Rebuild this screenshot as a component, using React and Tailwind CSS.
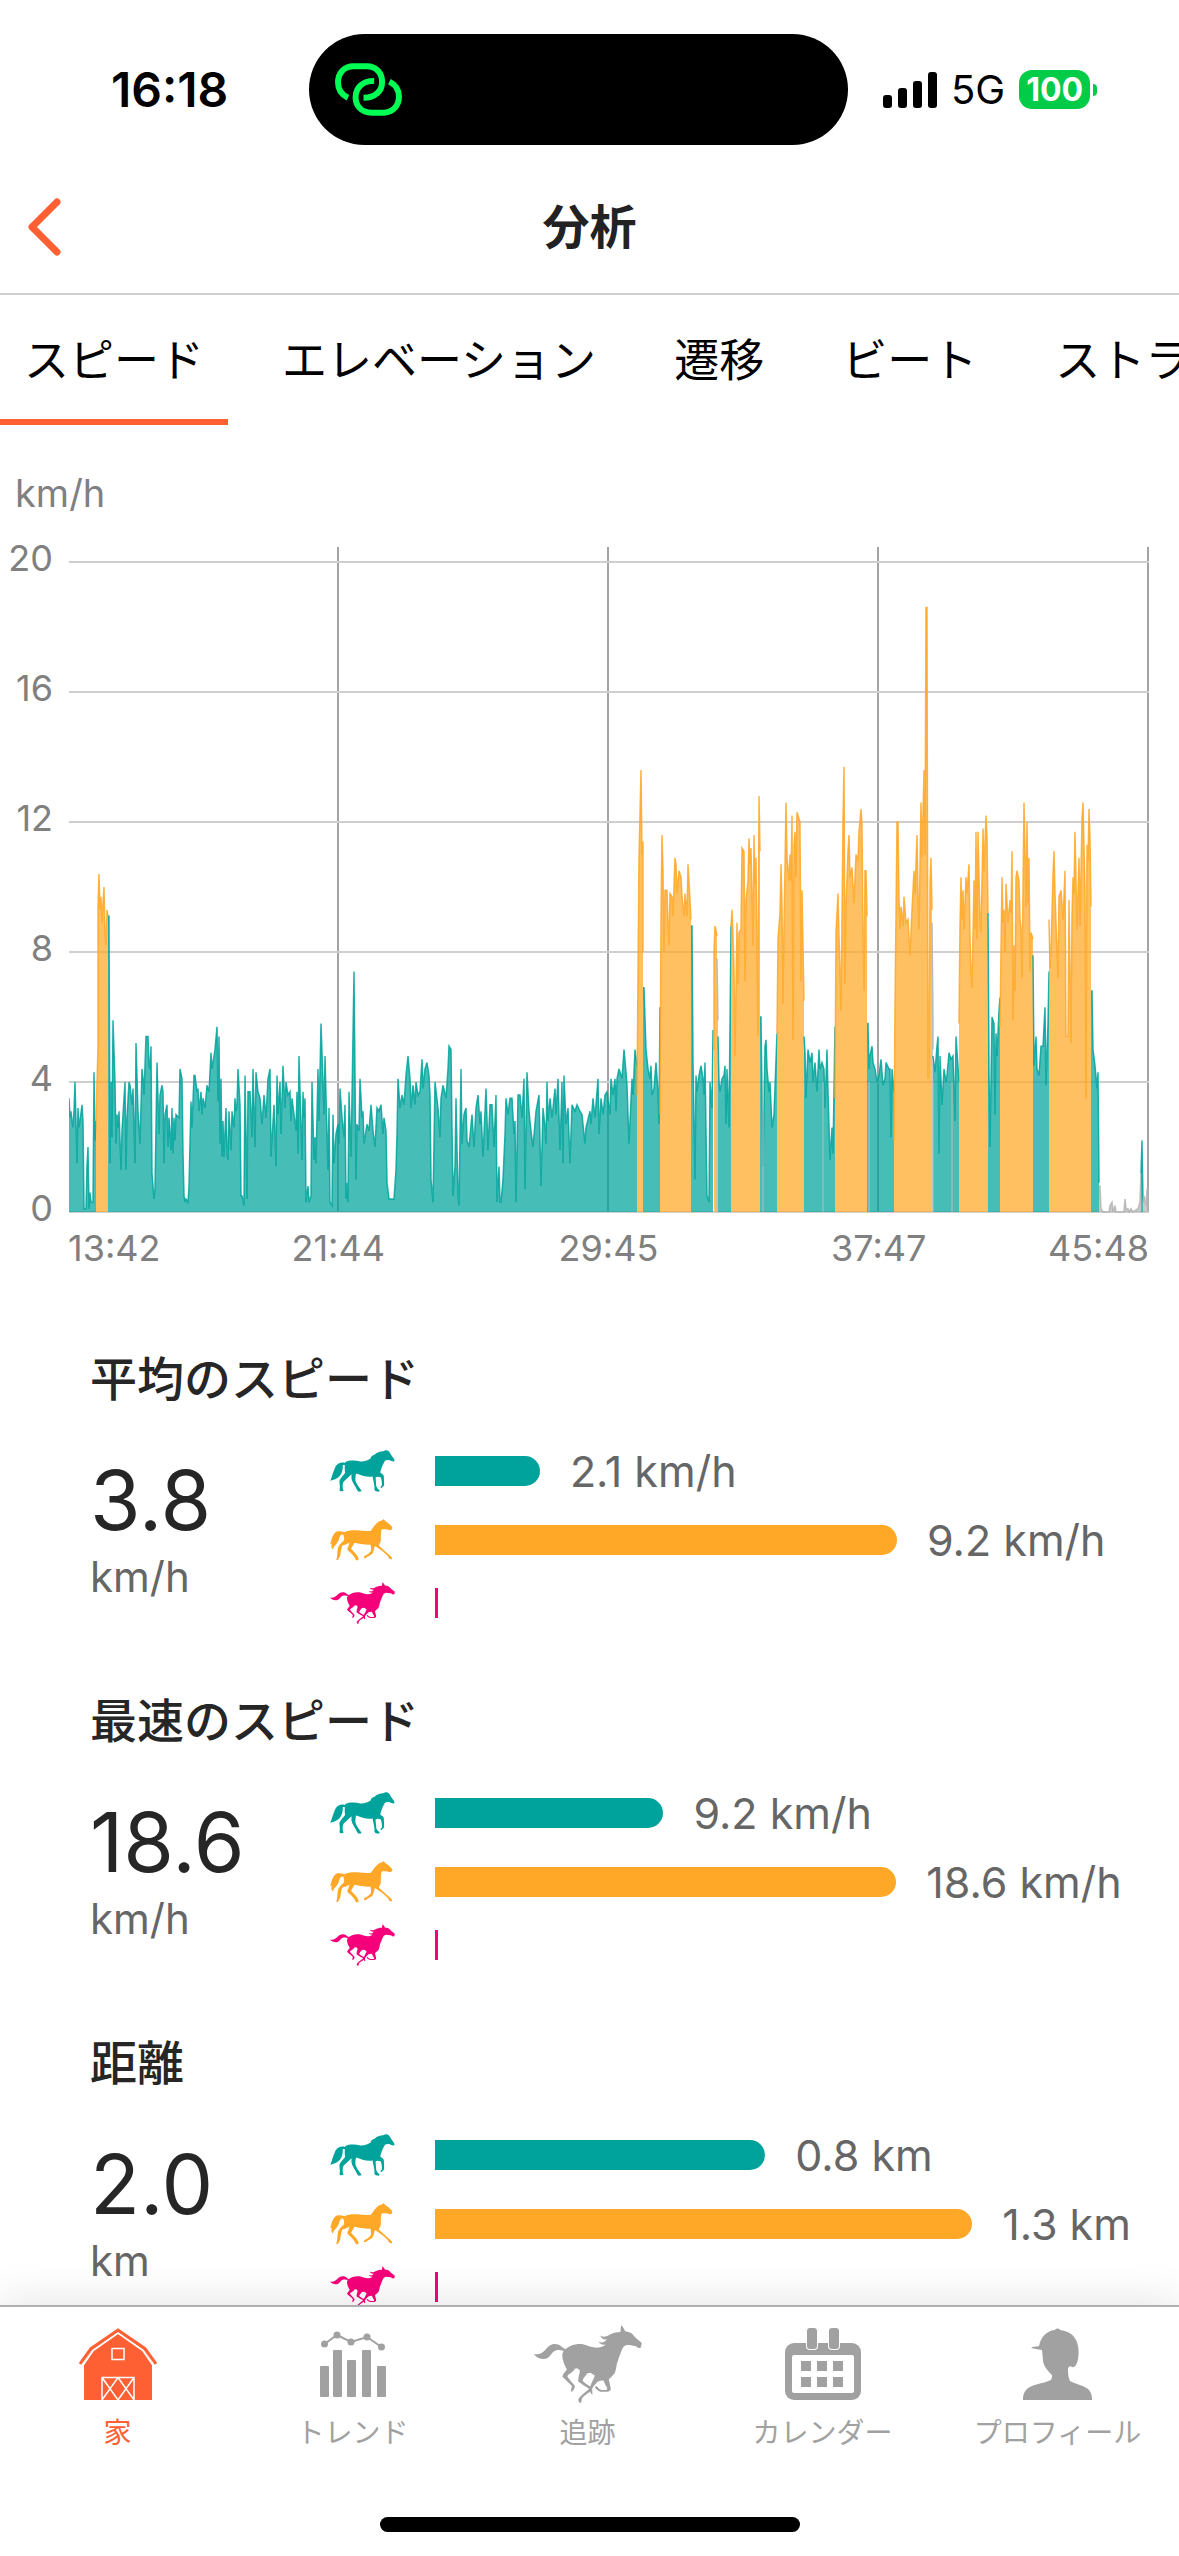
import React, { useState } from "react";

const TEAL = "#00a39b";
const ORANGE = "#ffa726";
const GRAY = "#b4b4b4";

const tabs = ["スピード", "エレベーション", "遷移", "ビート", "ストライド"];
const yLabels = ["20", "16", "12", "8", "4", "0"];

// each segment: "x,speed" pairs, speed in tenths of km/h
const segments = [
  {
    color: TEAL,
    data: "0,35 1,29 2,31 3,28 4,26 5,31 6,40 8,15 9,32 10,26 11,28 13,33 14,28 15,1 17,1 18,14 19,20 20,1 21,6 22,3 24,3 25,43 26,22 27,28",
  },
  {
    color: ORANGE,
    data: "27,28 29,51 29,94 30,104 31,93 32,97 33,89 34,95 35,100 36,85 37,82 38,93 39,91",
  },
  {
    color: TEAL,
    data: "39,91 40,91 41,15 42,40 43,23 44,59 46,40 47,21 48,30 49,26 50,31 52,13 53,25 56,40 57,13 58,29 60,40 61,39 63,33 64,38 66,15 67,52 69,31 71,21 73,44 74,41 75,36 77,54 79,54 80,45 81,44 82,51 83,12 85,4 86,7 88,46 90,24 91,36 93,39 94,37 95,15 96,30 98,33 99,20 100,29 102,19 103,32 104,18 105,29 106,22 107,30 110,29 111,44 113,41 114,18 115,5 116,3 117,4 119,3 120,8 122,34 123,26 125,42 126,42 128,37 129,38 130,31 132,37 133,30 134,35 136,32 138,39 140,37 142,49 143,44 145,48 146,50 148,57 149,34 150,54 151,21 152,41 153,17 154,28 155,17 157,32 158,18 159,16 160,31 162,19 163,31 165,26 166,35 167,31 168,33 169,44 171,33 172,5 173,5 175,2 176,42 178,4 179,37 181,37 183,23 184,44 186,20 187,43 189,37 191,35 193,27 195,36 197,29 199,41 201,44 202,17 205,33 207,14 208,42 209,30 211,40 212,24 214,45 216,32 217,40 219,36 221,37 222,28 223,35 227,25 228,37 229,18 230,48 233,16 234,37 235,29 236,35 237,3 239,8 240,3 242,5 243,40 245,16 246,23 247,15 249,44 250,28 252,58 253,49 255,30 256,48 258,24 259,13 260,32 261,3 263,2 264,30 265,15 267,24 269,27 270,21 271,38 273,29 275,23 276,33 277,4 278,9 279,3 280,37 282,17 283,35 285,74 287,10 288,27 290,25 291,41 293,29 294,31 295,21 298,27 300,25 302,33 304,25 306,20 308,32 310,31 312,33 314,24 315,29 317,25 318,9 320,4 325,4 327,13 328,24 329,41 331,32 333,36 335,33 337,42 339,48 341,41 342,32 344,39 346,33 347,40 349,36 351,37 353,47 354,38 356,44 358,46 360,42 361,36 362,10 364,3 366,40 369,32 371,23 372,35 374,39 377,35 379,44 380,51 382,50 383,26 384,5 386,14 387,35 389,5 390,2 392,44 393,21 395,30 397,32 398,22 400,20 403,30 405,20 407,32 409,36 411,27 412,31 414,17 417,38 419,19 421,33 423,33 425,20 427,36 428,3 430,14 431,3 432,3 434,10 436,24 437,35 439,30 441,35 443,35 445,24 446,28 447,3 449,36 451,36 453,29 455,41 456,7 458,43 460,31 462,25 464,20 467,31 470,36 472,8 474,32 476,26 477,21 478,40 479,28 481,35 483,29 486,38 487,30 489,41 491,19 493,40 494,15 495,42 497,27 499,32 501,15 503,33 506,31 508,33 511,31 513,30 516,21 517,26 521,31 522,27 524,35 526,29 529,41 530,24 532,35 534,30 536,36 538,37 541,30 542,41 544,36 546,41 547,31 548,41 550,44 553,41 555,50 557,43 558,39 560,21 563,41 564,36 566,50 568,45",
  },
  { color: ORANGE, data: "568,36 569,73 570,109 572,136 573,110 574,114 574,80" },
  {
    color: TEAL,
    data: "574,69 575,69 577,50 579,44 581,41 582,45 583,36 585,38 587,46 589,37 590,27 591,63",
  },
  {
    color: ORANGE,
    data: "591,30 592,91 593,116 594,105 595,80 596,99 598,99 599,88 600,82 601,98 603,97 604,91 606,109 607,107 608,98 610,105 612,103 613,97 615,91 616,98 618,91 619,107 621,96 622,90",
  },
  {
    color: TEAL,
    data: "622,88 623,88 624,46 626,10 627,42 628,37 630,42 632,45 634,41 635,36 636,46 638,5 640,3 641,40 643,32 644,56",
  },
  { color: ORANGE, data: "645,50 645,80 646,88 648,85" },
  { color: GRAY, data: "648,78 649,59" },
  {
    color: TEAL,
    data: "649,54 650,40 651,37 653,41 655,42 656,45 657,27 658,44 660,26 662,88",
  },
  {
    color: ORANGE,
    data: "662,88 663,93 664,85 665,75 666,48 668,89 669,70 670,86 672,87 673,112 675,111 676,71 677,96 679,102 680,115 681,107 682,112 684,82 685,116 686,101 687,109 689,54 690,128 691,111",
  },
  {
    color: TEAL,
    data: "691,60 692,60 693,37 694,14 696,51 697,53 698,44 700,37 701,40 703,26 705,30 708,55",
  },
  {
    color: ORANGE,
    data: "708,55 709,84 711,92 712,107 713,94 714,64 715,88 716,106 717,126 718,109 720,102 721,110 722,102 723,122 724,53 725,113 726,117 727,103 728,123 730,121 731,120 732,71 733,99 735,65",
  },
  {
    color: TEAL,
    data: "735,54 736,49 737,35 739,50 741,46 743,49 744,40 746,46 748,37 750,50 751,44 753,46 755,44 756,32 758,50 759,37 761,16 763,26 764,18 766,57",
  },
  {
    color: ORANGE,
    data: "766,35 767,86 769,98 770,85 772,62 773,91 774,120 775,137 776,70 777,94 779,111 780,116 781,103 783,106 785,95 787,110 789,108 790,117 792,124 793,119 794,86 795,68 796,105 797,105 798,91",
  },
  {
    color: TEAL,
    data: "798,58 799,58 800,44 801,48 803,51 804,46 806,44 808,40 810,42 812,47 814,39 816,41 817,46 820,44 821,44 822,23 823,44 825,37",
  },
  {
    color: ORANGE,
    data: "825,22 826,63 828,120 829,120 830,96 831,87 832,94 834,88 835,97 837,89 839,90 841,79 843,93 845,105 846,98 848,116 849,96 850,87 852,126 853,109 855,136 856,110 857,186 858,186 859,41 860,43 861,101 862,109 863,93",
  },
  { color: GRAY, data: "863,89 864,60 864,50" },
  {
    color: TEAL,
    data: "864,48 866,43 868,51 869,54 870,18 871,48 873,33 875,44 877,40 878,42 880,49 882,47 884,48 886,28 887,54 890,40",
  },
  {
    color: ORANGE,
    data: "890,58 891,88 892,103 893,90 894,99 895,87 897,103 898,98 900,107 901,85 902,73 903,69 905,102 906,87 907,117 908,84 909,117 911,90 912,86 914,118 915,105 917,122 918,115 919,92",
  },
  { color: TEAL, data: "919,92 920,43 921,20 923,60 925,58 926,30 927,55 928,48 930,62 931,66" },
  {
    color: ORANGE,
    data: "931,57 932,80 933,103 934,89 935,93 936,80 937,101 939,89 941,96 942,92 943,111 944,59 945,82 946,68 947,103 948,105 950,102 951,90 952,87 953,72 955,126 957,94 958,120 959,95 960,109 961,74 962,86 964,84",
  },
  {
    color: TEAL,
    data: "964,79 965,45 967,54 968,44 970,42 972,51 974,51 976,63 977,39 979,58 980,74",
  },
  {
    color: ORANGE,
    data: "980,90 981,75 982,80 984,104 985,111 986,98 987,89 989,72 990,97 992,99 994,90 995,97 996,105 997,54 999,54 1000,96 1002,52 1003,91 1004,103 1005,98 1006,117 1008,87 1010,109 1011,88 1013,121 1014,126 1016,99 1017,35 1018,113 1019,108 1020,124 1021,115 1022,94",
  },
  { color: TEAL, data: "1022,68 1023,68 1024,50 1026,45 1028,38 1029,43 1030,9" },
  {
    color: GRAY,
    data: "1030,8 1031,8 1032,1 1034,0 1040,0 1041,2 1043,3 1044,0 1046,2 1047,0 1055,0 1056,4 1057,1 1059,1 1060,0 1062,1 1064,0 1069,1 1071,3 1072,12",
  },
  { color: TEAL, data: "1072,12 1073,22 1074,3" },
  { color: GRAY, data: "1074,3 1075,5 1077,2 1078,7 1080,7" },
];

const stats = [
  {
    title: "平均のスピード",
    value: "3.8",
    unit: "km/h",
    walk: { label: "2.1 km/h", width: 14.1 },
    trot: { label: "9.2 km/h", width: 62.1 },
  },
  {
    title: "最速のスピード",
    value: "18.6",
    unit: "km/h",
    walk: { label: "9.2 km/h", width: 30.7 },
    trot: { label: "18.6 km/h", width: 62 },
  },
  {
    title: "距離",
    value: "2.0",
    unit: "km",
    walk: { label: "0.8 km", width: 44.4 },
    trot: { label: "1.3 km", width: 72.2 },
  },
];

const toPoints = (data) =>
  data.split(" ").map((p) => {
    const [x, v] = p.split(",").map(Number);
    return [x, 665 - v * 3.25];
  });

const WalkIcon = () => (
  <svg viewBox="60 62 195 127" className="w-[65px] h-[42px] shrink-0" fill={TEAL}>
    <path d="M60 155C66 143 68 128 76 112C82 102 94 98 103 101C112 92 135 93 150 97C165 98 175 92 182 88C183 80 188 78 194 76C200 70 210 66 220 66C226 62 232 62 236 65C240 68 243 76 249 84C253 89 256 93 253 97L245 95C240 91 232 91 226 94C220 104 215 115 211 130C216 134 222 137 222 142L223 168C220 173 217 177 213 177C210 175 214 172 216 169C217 160 215 152 213 145C206 142 201 142 197 145L199 170C200 177 206 180 209 184L208 188L198 187C193 183 193 179 194 174L188 142C172 145 152 138 138 133C136 142 135 150 137 157C141 166 147 174 151 180L155 187L146 188C140 184 139 178 137 175C131 164 126 157 125 151C123 145 125 141 124 135C118 142 107 150 100 158C97 165 97 172 98 178L100 186L90 187C86 183 90 178 89 172C89 165 86 158 89 152C94 143 102 137 105 131C103 122 104 114 104 108C102 107 100 107 98 108C98 118 97 130 90 139C83 148 70 152 60 155Z" />
  </svg>
);

const TrotIcon = () => (
  <svg viewBox="60 269 195 127" className="w-[65px] h-[42px] shrink-0" fill={ORANGE}>
    <path d="M60 345C64 330 68 312 80 307C88 305 96 307 103 309C115 302 135 303 150 304C162 305 175 306 182 305C190 295 198 282 206 277C212 273 218 274 222 269L226 275C232 279 240 284 247 293C249 299 246 303 240 303C232 299 224 299 215 301C212 312 213 325 213 335C211 343 207 346 207 350C218 359 232 372 243 382C247 386 248 389 246 391L239 390C236 380 222 370 212 362L195 351C193 358 191 366 188 373C182 378 173 382 169 386L162 388C160 383 165 379 170 378C176 375 180 370 183 366C184 360 183 354 182 347C165 348 148 344 133 341C130 348 125 354 123 359C129 366 137 373 142 381L146 390C144 395 139 396 136 391C135 384 128 378 122 371C115 366 110 362 112 357C117 350 116 345 118 340C112 345 103 347 96 350C93 358 92 370 90 380L83 393C79 395 77 390 80 386C82 378 81 368 83 360C84 348 96 340 101 334C103 328 102 322 99 316C95 315 91 317 89 322C86 330 86 336 80 342C76 348 70 352 68 361C63 356 62 350 65 343Z" />
  </svg>
);

const GallopIcon = ({ className }) => (
  <svg viewBox="105 44 325 235" preserveAspectRatio="none" className={className} fill="currentColor">
    <path d="M105 131C120 135 130 129 140 118C152 102 165 98 178 103C186 106 191 113 199 117C212 105 235 98 252 102C268 106 282 114 300 112C308 111 316 108 322 103C310 105 302 101 299 94C306 98 314 97 319 93L325 87C315 90 307 84 304 75C313 83 325 78 335 72C345 66 355 66 365 65L367 45C373 49 377 57 379 63C390 65 398 67 403 73C408 82 420 88 428 97C431 102 427 106 426 113C420 115 416 112 412 108C402 105 392 104 384 104C376 106 371 113 369 120C364 133 358 148 354 162C352 174 351 183 347 190C341 198 334 203 330 209C333 218 334 228 336 236C335 243 331 245 325 245L305 245C297 243 291 237 288 230L293 228C297 233 302 239 309 240L323 240C327 238 325 232 320 225L314 211C307 211 302 212 296 215C290 222 283 230 280 236L281 254C277 251 274 247 274 244C265 251 256 256 250 264C247 270 249 275 246 279C240 278 236 270 240 265C248 254 262 245 271 236C258 228 246 220 238 214C237 203 243 190 243 181C237 174 232 173 228 176C222 188 211 190 205 198C208 206 220 217 228 228C228 237 222 243 218 246C214 240 219 234 219 228C210 217 197 207 190 199C193 190 200 184 204 178C196 164 190 148 190 135C190 129 192 126 194 122C187 119 180 118 172 120C158 124 155 140 143 145C130 149 112 144 105 131ZM251 212C258 219 267 225 274 229C279 217 284 207 288 196L275 188L265 190C260 198 252 205 251 212Z" fillRule="evenodd" />
  </svg>
);

const BarnIcon = () => (
  <svg viewBox="0 0 78 72" className="w-[78px] h-[72px]">
    <path d="M5 72V34L13 21L39 3L65 21L73 34V72Z" fill="currentColor" />
    <path d="M2 40L14 22.500L39 5L64 22.500L76 40" fill="none" stroke="#fff" strokeWidth="2" />
    <path d="M1 36L12 20.500L39 2L66 20.500L77 36" fill="none" stroke="currentColor" strokeWidth="3" />
    <path d="M33 20.500H45V31.500H33ZM23 72V49.500H55V72M23 49.500L39 72L55 49.500M23 72L39 49.500L55 72" fill="none" stroke="#fff" strokeWidth="1.500" />
  </svg>
);

const TrendIcon = () => (
  <svg viewBox="0 0 66 66" className="w-[66px] h-[66px]" fill="currentColor">
    <rect x="0" y="35" width="9" height="31" rx="1" />
    <rect x="13" y="19" width="9" height="47" rx="1" />
    <rect x="27" y="29" width="9" height="37" rx="1" />
    <rect x="42" y="19" width="9" height="47" rx="1" />
    <rect x="57" y="35" width="9" height="31" rx="1" />
    <path d="M4.500 13L17 4L31 11L47 6L61.500 16" fill="none" stroke="currentColor" strokeWidth="2" />
    <circle cx="4.500" cy="13" r="3.500" />
    <circle cx="17" cy="4" r="3.500" />
    <circle cx="31" cy="11" r="3.500" />
    <circle cx="47" cy="6" r="3.500" />
    <circle cx="61.500" cy="16" r="3.500" />
  </svg>
);

const CalendarIcon = () => (
  <svg viewBox="0 0 76 72" className="w-[76px] h-[72px]" fill="currentColor">
    <rect x="0" y="15" width="76" height="57" rx="9" />
    <rect x="7" y="27" width="62" height="38" rx="2" fill="#fff" />
    <rect x="21" y="-2" width="12" height="24" rx="4" fill="#fff" />
    <rect x="43" y="-2" width="12" height="24" rx="4" fill="#fff" />
    <rect x="22" y="0" width="10" height="21" rx="3" />
    <rect x="44" y="0" width="10" height="21" rx="3" />
    <path d="M16 33H26V43H16ZM32 33H42V43H32ZM48 33H58V43H48ZM16 49H26V59H16ZM32 49H42V59H32ZM48 49H58V59H48Z" />
  </svg>
);

const ProfileIcon = () => (
  <svg viewBox="0 0 69 72" className="w-[69px] h-[72px]" fill="currentColor">
    <path d="M32 2C33 0 36 0 37 2C45 3 50 6 53 12C56 18 56 26 55 31C54 36 52 40 49 39C47 37 45 39 45 41C45 45 45 49 47 53C52 56 60 57 65 61C69 65 69 69 69 72H0C0 69 0 66 3 62C8 56 20 56 28 52C29 50 29 48 29 47C24 42 20 37 20 32L19 22C15 21 11 21 8 20C10 18 14 19 16 18C18 9 23 3 32 2Z" />
  </svg>
);

const navItems = [
  { label: "家", icon: <BarnIcon />, active: true },
  { label: "トレンド", icon: <TrendIcon /> },
  { label: "追跡", icon: <GallopIcon className="w-[108px] h-[78px]" /> },
  { label: "カレンダー", icon: <CalendarIcon /> },
  { label: "プロフィール", icon: <ProfileIcon /> },
];

const StatusBar = () => (
  <div className="flex items-center pt-[34px] pb-4 text-black">
    <div className="w-[309px] pl-[111px] text-[48px] leading-[60px] font-semibold">16:18</div>
    <div className="flex-1 h-[111px] rounded-full bg-black flex items-center pl-[25px]">
      <svg viewBox="72 96 206 160" className="w-[69px] h-[53px]" fill="none" stroke="#00ff55" strokeWidth="18">
        <path d="M113 201C94 192 83 175 83 155C83 128 100 106 130 106H170C200 106 216 128 216 153C216 181 195 201 160 201" />
        <path d="M238 152C258 162 267 177 267 197C267 228 245 246 220 246H185C152 246 136 224 136 200C136 170 157 150 192 150" />
      </svg>
    </div>
    <div className="w-[331px] pl-[35px] flex items-center">
      <svg viewBox="0 0 54 36" className="w-[54px] h-[36px]">
        <rect x="0" y="23" width="9" height="13" rx="3" />
        <rect x="15" y="16" width="9" height="20" rx="3" />
        <rect x="30" y="9" width="9" height="27" rx="3" />
        <rect x="45" y="0" width="9" height="36" rx="3" />
      </svg>
      <span className="ml-3.5 text-[40px] leading-[48px]">5G</span>
      <span className="ml-3.5 w-[71px] h-[39px] rounded-[13px] bg-[#00cc47] text-white text-[32px] leading-[39px] font-bold text-center">
        100
      </span>
      <span className="ml-[3px] w-1 h-3 rounded-r-full bg-[#00cc47]" />
    </div>
  </div>
);

const SpeedChart = () => (
  <section className="pt-12 pr-[30px] text-[#808080]">
    <div className="pl-[15px] text-[38px] leading-[40px]">km/h</div>
    <div className="flex mt-[25px]">
      <div className="w-[69px] pr-4 h-[690px] shrink-0 flex flex-col justify-between text-right text-[36px] leading-[40px]">
        {yLabels.map((l) => (
          <span key={l}>{l}</span>
        ))}
      </div>
      <svg viewBox="0 0 1080 666" preserveAspectRatio="none" className="flex-1 min-w-0 h-[666px] mt-[9px]">
        {[269, 539, 809, 1079].map((x) => (
          <line key={x} x1={x} x2={x} y1="0" y2="665" stroke="#a3a3a3" strokeWidth="2" />
        ))}
        {[15, 145, 275, 405, 535, 665].map((y) => (
          <line key={y} x1="0" x2="1080" y1={y} y2={y} stroke="#cfcfcf" strokeWidth="2" />
        ))}
        {segments.map(({ color, data }, i) => {
          const pts = toPoints(data);
          const line = pts.map((p) => p.join(" ")).join("L");
          return (
            <g key={i}>
              <path
                d={`M${pts[0][0]} 665L${line}L${pts[pts.length - 1][0]} 665Z`}
                fill={color}
                fillOpacity="0.72"
              />
              <path d={`M${line}`} fill="none" stroke={color} strokeOpacity="0.85" strokeWidth="1.500" />
            </g>
          );
        })}
        {[648, 694, 754, 800, 864, 883].map((x) => (
          <line key={x} x1={x} x2={x} y1="535" y2="665" stroke="#bbb" strokeWidth="1" />
        ))}
      </svg>
    </div>
    <div className="grid grid-cols-8 pl-[68px] text-[36px] leading-[40px] text-center whitespace-nowrap">
      <span className="text-left">13:42</span>
      <span className="col-span-2">21:44</span>
      <span className="col-span-2">29:45</span>
      <span className="col-span-2">37:47</span>
      <span className="flex justify-end">45:48</span>
    </div>
  </section>
);

const Stat = ({ stat }) => (
  <section className="pl-[90px] pb-16">
    <h2 className="text-[47px] leading-[60px] font-medium text-[#262626]">{stat.title}</h2>
    <div className="flex mt-8">
      <div className="w-[240px] shrink-0 pt-[18px]">
        <div className="text-[82px] leading-[84px] text-[#262626]">{stat.value}</div>
        <div className="mt-1 text-[42px] leading-[60px] text-[#666]">{stat.unit}</div>
      </div>
      <div className="flex-1 flex flex-col gap-[9px] text-[43px] text-[#666]">
        <div className="flex items-center gap-10 h-[60px]">
          <WalkIcon />
          <div className="flex-1 flex items-center gap-[30px] whitespace-nowrap">
            <div className="h-[30px] shrink-0 rounded-r-full bg-[#00a39b]" style={{ width: `${stat.walk.width}%` }} />
            {stat.walk.label}
          </div>
        </div>
        <div className="flex items-center gap-10 h-[60px]">
          <TrotIcon />
          <div className="flex-1 flex items-center gap-[30px] whitespace-nowrap">
            <div className="h-[30px] shrink-0 rounded-r-full bg-[#ffa726]" style={{ width: `${stat.trot.width}%` }} />
            {stat.trot.label}
          </div>
        </div>
        <div className="flex items-center gap-10 h-12 text-[#f5007a]">
          <GallopIcon className="w-[65px] h-[42px] shrink-0" />
          <div className="h-[30px] w-[3px] bg-[#f5007a]" />
        </div>
      </div>
    </div>
  </section>
);

const App = () => {
  const [tab, setTab] = useState("スピード");

  return (
    <div className="h-screen flex flex-col overflow-hidden bg-white font-['Inter','Noto_Sans_CJK_JP',sans-serif]">
      <StatusBar />

      {/* HEADER */}
      <header className="h-[134px] shrink-0 grid grid-cols-3 items-center border-b-2 border-[#d0d0d0]">
        <button aria-label="戻る" className="pl-[26px] justify-self-start text-[#ff6033]">
          <svg viewBox="0 0 36 60" className="w-[36px] h-[60px]" fill="none" stroke="currentColor" strokeWidth="7" strokeLinecap="round" strokeLinejoin="round">
            <path d="M31 5L6 30L31 55" />
          </svg>
        </button>
        <h1 className="text-center text-[47px] leading-[60px] font-bold text-[#222]">分析</h1>
      </header>

      {/* TABS */}
      <div className="flex shrink-0 gap-[30px] overflow-hidden whitespace-nowrap text-[45px] leading-[60px] text-black">
        {tabs.map((t) => (
          <button
            key={t}
            onClick={() => setTab(t)}
            className={`shrink-0 px-6 pt-9 pb-7 border-b-6 ${
              tab === t ? "border-[#ff6033]" : "border-transparent"
            }`}
          >
            {t}
          </button>
        ))}
      </div>

      <main className="flex-1 min-h-0 overflow-x-hidden overflow-y-auto [scrollbar-width:none]">
        <SpeedChart />
        <div className="pt-[81px]">
          {stats.map((s) => (
            <Stat key={s.title} stat={s} />
          ))}
        </div>
      </main>

      {/* BOTTOM NAV */}
      <nav className="relative z-10 shrink-0 bg-white border-t-2 border-[#b0b0b0] shadow-[0_0_45px_rgba(0,0,0,0.12)] pt-[18px] pb-6">
        <div className="grid grid-cols-5 pr-1">
          {navItems.map((item) => (
            <button
              key={item.label}
              className={`flex flex-col items-center text-[28px] leading-[36px] whitespace-nowrap ${
                item.active ? "text-[#ff6033]" : "text-[#a1a1a1]"
              }`}
            >
              <span className="h-[78px] flex items-center">{item.icon}</span>
              <span className="mt-3">{item.label}</span>
            </button>
          ))}
        </div>
        <div className="mt-[66px] mx-auto w-[420px] h-[15px] rounded-full bg-black" />
      </nav>
    </div>
  );
};

export default App;
